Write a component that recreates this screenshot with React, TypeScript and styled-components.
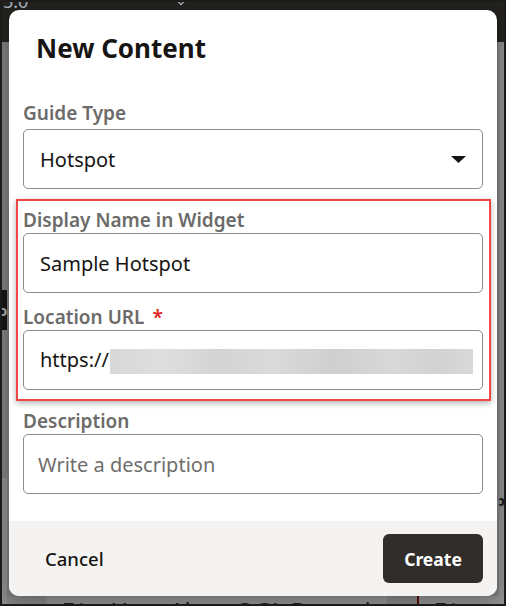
import React from 'react';
import styled, { createGlobalStyle } from 'styled-components';

const GlobalStyle = createGlobalStyle`
    html, body {
        margin: 0;
        padding: 0;
        background: #1b1b1b;
    }
    * {
        box-sizing: border-box;
    }
`;

const font = `'Noto Sans', 'Open Sans', Arial, sans-serif`;

const Frame = styled.div`
    position: relative;
    width: 506px;
    height: 606px;
    border: 2px solid #1b1b1b;
    overflow: hidden;
    display: flex;
    flex-direction: column;
    font-family: ${font};
    background: #7c7c7c;
`;

/* page behind the dialog (dimmed) */
const TopBar = styled.div`
    height: 40px;
    flex: none;
    background: #24221f;
    display: flex;
    align-items: flex-start;
    padding-left: 1px;
    gap: 150px;
`;

const Version = styled.span`
    margin-top: -12px;
    font-size: 18px;
    color: #aab3c2;
    line-height: 22px;
`;

const TopChevron = styled.span`
    margin-top: -4px;
    width: 6px;
    height: 6px;
    border-right: 1.5px solid #c9ccd2;
    border-bottom: 1.5px solid #c9ccd2;
    transform: rotate(45deg);
`;

const Dimmed = styled.div`
    flex: 1;
    display: flex;
`;

const Rail = styled.div`
    width: 7px;
    display: flex;
    flex-direction: column;
`;

const RailPart = styled.div<{ $h?: number; $tone: string; $ink?: string }>`
    height: ${(p) => (p.$h ? `${p.$h}px` : 'auto')};
    flex: ${(p) => (p.$h ? 'none' : '1')};
    background: ${(p) => p.$tone};
    overflow: hidden;
    font-size: 15px;
    font-weight: 700;
    color: ${(p) => p.$ink ?? '#a9a9a9'};
    line-height: 40px;
    text-indent: -4px;
`;

const Center = styled.div`
    flex: 1;
    display: flex;
    flex-direction: column;
    justify-content: flex-end;
`;

const AlertRow = styled.div`
    height: 8px;
    display: flex;
    align-items: flex-start;
    background: #7f7f7f;
    overflow: hidden;
`;

const AlertTile = styled.div<{ $w: number; $tone: string }>`
    width: ${(p) => p.$w}px;
    height: 100%;
    background: ${(p) => p.$tone};
    display: flex;
    gap: 22px;
    padding-left: 14px;
    font-size: 24px;
    line-height: 24px;
    color: #1e1e1e;
`;

const AlertText = styled.span`
    margin-top: 3px;
    white-space: nowrap;
`;

const Divider = styled.div`
    width: 2px;
    height: 100%;
    background: #5a0d0d;
`;

/* dialog */
const Modal = styled.div`
    position: absolute;
    top: 8px;
    left: 7px;
    width: 488px;
    height: 586px;
    background: #ffffff;
    border-radius: 10px;
    display: flex;
    flex-direction: column;
    overflow: hidden;
    box-shadow: 0 4px 16px rgba(0, 0, 0, 0.25);
`;

const Header = styled.div`
    padding: 21px 28px 0 27px;
`;

const Title = styled.h1`
    margin: 0;
    font-size: 26px;
    line-height: 34px;
    font-weight: 700;
    color: #161513;
`;

const Body = styled.div`
    flex: 1;
    padding: 36px 14px 0;
    display: flex;
    flex-direction: column;
`;

const Field = styled.div<{ $top?: number }>`
    display: flex;
    flex-direction: column;
    margin-top: ${(p) => p.$top ?? 0}px;
`;

const Label = styled.label<{ $gap?: number }>`
    font-size: 19px;
    line-height: 24px;
    font-weight: 600;
    color: #6c6b69;
    margin-bottom: ${(p) => p.$gap ?? 1}px;
`;

const Required = styled.span`
    color: #e1241c;
    margin-left: 8px;
`;

const InputBox = styled.div<{ $placeholder?: boolean }>`
    height: 60px;
    border: 1px solid #8f8b86;
    border-radius: 5px;
    padding: 0 16px 0 16px;
    display: flex;
    align-items: center;
    font-size: 20px;
    color: ${(p) => (p.$placeholder ? '#6f6e6c' : '#161513')};
    background: #fff;
`;

const Value = styled.span<{ $shift?: number }>`
    flex: 1;
    white-space: nowrap;
    margin-left: ${(p) => p.$shift ?? 0}px;
`;

const Redacted = styled.span`
    display: inline-block;
    vertical-align: middle;
    width: 363px;
    height: 25px;
    margin-left: 1px;
    background: linear-gradient(
        90deg,
        #d8d8d8 0%,
        #dedede 15%,
        #d4d4d4 30%,
        #dadada 45%,
        #cfcfcf 62%,
        #d8d8d8 78%,
        #d2d2d2 90%,
        #d9d9d9 100%
    );
`;

const Highlight = styled.div`
    margin: 10px -8px 0 -7px;
    border: 2px solid #f04848;
    padding: 7px 6px 9px 5px;
    box-shadow: 0 2px 6px rgba(0, 0, 0, 0.32);
    display: flex;
    flex-direction: column;
`;

const Footer = styled.div`
    height: 75px;
    flex: none;
    background: #f4f3f1;
    display: flex;
    align-items: center;
    justify-content: space-between;
    padding: 0 14px 0 24px;
`;

const GhostButton = styled.button`
    border: none;
    background: transparent;
    font-family: ${font};
    font-size: 18.5px;
    font-weight: 500;
    color: #161513;
    padding: 0 12px;
    height: 49px;
`;

const PrimaryButton = styled.button`
    border: none;
    width: 100px;
    height: 49px;
    border-radius: 6px;
    background: #312d2a;
    color: #ffffff;
    font-family: ${font};
    font-size: 17.5px;
    font-weight: 700;
`;

const Caret = () => (
    <svg width="15" height="7" viewBox="0 0 15 7">
        <path d="M0 0 L15 0 L7.5 7 Z" fill="#161513" />
    </svg>
);

export default function App() {
    return (
        <>
            <GlobalStyle />
            <Frame>
                <TopBar>
                    <Version>5.0</Version>
                    <TopChevron />
                </TopBar>
                <Dimmed>
                    <Rail>
                        <RailPart $h={248} $tone="#7b7b7b" />
                        <RailPart $h={40} $tone="#151515">o</RailPart>
                        <RailPart $h={148} $tone="#7d7d7d" />
                        <RailPart $tone="#8a8a8a" />
                    </Rail>
                    <Center>
                        <AlertRow>
                            <AlertTile $w={40} $tone="#808080" />
                            <AlertTile $w={340} $tone="#8d8d8d">
                                <AlertText>E^</AlertText>
                                <AlertText>User Alert: OGL Downtime</AlertText>
                            </AlertTile>
                            <AlertTile $w={30} $tone="#808080" />
                            <Divider />
                            <AlertTile $w={80} $tone="#8d8d8d">
                                <AlertText>E^</AlertText>
                            </AlertTile>
                        </AlertRow>
                    </Center>
                    <Rail>
                        <RailPart $h={438} $tone="#898989" />
                        <RailPart $h={40} $tone="#8a8a8a" $ink="#1a1a1a">p</RailPart>
                        <RailPart $tone="#8e8e8e" />
                    </Rail>
                </Dimmed>

                <Modal>
                    <Header>
                        <Title>New Content</Title>
                    </Header>
                    <Body>
                        <Field>
                            <Label $gap={4}>Guide Type</Label>
                            <InputBox>
                                <Value>Hotspot</Value>
                                <Caret />
                            </InputBox>
                        </Field>

                        <Highlight>
                            <Field>
                                <Label>Display Name in Widget</Label>
                                <InputBox>
                                    <Value>Sample Hotspot</Value>
                                </InputBox>
                            </Field>
                            <Field $top={12}>
                                <Label>
                                    Location URL<Required>*</Required>
                                </Label>
                                <InputBox>
                                    <Value>
                                        https://<Redacted />
                                    </Value>
                                </InputBox>
                            </Field>
                        </Highlight>

                        <Field $top={8}>
                            <Label>Description</Label>
                            <InputBox $placeholder>
                                <Value $shift={-2}>Write a description</Value>
                            </InputBox>
                        </Field>
                    </Body>
                    <Footer>
                        <GhostButton>Cancel</GhostButton>
                        <PrimaryButton>Create</PrimaryButton>
                    </Footer>
                </Modal>
            </Frame>
        </>
    );
}
